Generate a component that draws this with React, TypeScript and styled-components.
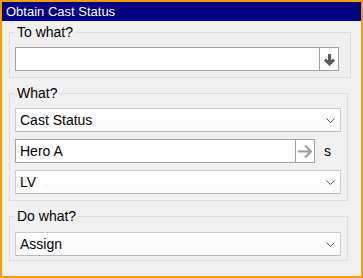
import React from 'react';
import styled, { createGlobalStyle } from 'styled-components';

const GlobalStyle = createGlobalStyle`
  html, body {
    margin: 0;
    padding: 0;
    background: #ffffff;
  }
  body {
    font-family: "Liberation Sans", Arial, sans-serif;
  }
`;

const Window = styled.div`
  box-sizing: border-box;
  width: 363px;
  height: 278px;
  border: 2px solid #f59e0b;
  background: #f0f0f0;
`;

const TitleBar = styled.div`
  height: 19px;
  line-height: 19px;
  padding-left: 4px;
  background: #000080;
  color: #ffffff;
  font-size: 13px;
`;

const Group = styled.fieldset<{ $wide?: boolean; $padTop?: number; $padBottom?: number; $top?: number }>`
  display: block;
  margin: ${({ $top = 7 }) => $top}px ${({ $wide }) => ($wide ? 10 : 13)}px 0 7px;
  padding: ${({ $padTop = 7 }) => $padTop}px ${({ $wide }) => ($wide ? 11 : 6)}px
    ${({ $padBottom = 6 }) => $padBottom}px 5px;
  border: 1px solid #dcdcdc;
  min-width: 0;
`;

const GroupBody = styled.div`
  display: flex;
  flex-direction: column;
  gap: 7px;
`;

const Legend = styled.legend`
  padding: 0 2px;
  font-size: 14px;
  line-height: 16px;
  color: #000000;
`;

const Row = styled.div`
  display: flex;
  align-items: center;
`;

const TextBox = styled.div<{ $width?: number }>`
  box-sizing: border-box;
  height: 24px;
  display: flex;
  border: 1px solid #a0a0a0;
  background: #ffffff;
  ${({ $width }) => ($width ? `width: ${$width}px;` : 'width: 100%;')}
`;

const TextValue = styled.div`
  flex: 1;
  padding-left: 4px;
  font-size: 14px;
  line-height: 22px;
  color: #000000;
`;

const BoxButton = styled.div`
  width: 18px;
  border-left: 1px solid #a0a0a0;
  display: flex;
  align-items: center;
  justify-content: center;
`;

const Suffix = styled.span`
  margin-left: 9px;
  font-size: 14px;
  line-height: 16px;
  color: #000000;
`;

const Select = styled.div`
  box-sizing: border-box;
  height: 24px;
  display: flex;
  align-items: center;
  padding: 0 5px 0 4px;
  border: 1px solid #cacaca;
  border-bottom-color: #b8b8b8;
  border-radius: 1px;
  background: linear-gradient(#ffffff, #fafafa);
  font-size: 14px;
  color: #000000;
`;

const SelectText = styled.span`
  flex: 1;
`;

const DownArrow = () => (
  <svg width="13" height="13" viewBox="0 0 13 13">
    <path d="M6.5 1 V11 M2 6.5 L6.5 11 L11 6.5" stroke="#5c5c5c" strokeWidth="3" fill="none" />
  </svg>
);

const RightArrow = () => (
  <svg width="16" height="15" viewBox="0 0 16 15">
    <path d="M1 7.5 H14 M8 1.5 L14 7.5 L8 13.5" stroke="#9a9a9a" strokeWidth="2" fill="none" />
  </svg>
);

const Chevron = () => (
  <svg width="9" height="5" viewBox="0 0 9 5">
    <path d="M0.5 0.5 L4.5 4.5 L8.5 0.5" stroke="#5a5a5a" strokeWidth="1" fill="none" />
  </svg>
);

const Dropdown: React.FC<{ value: string }> = ({ value }) => (
  <Select>
    <SelectText>{value}</SelectText>
    <Chevron />
  </Select>
);

export default function App() {
  return (
    <>
      <GlobalStyle />
      <Window>
        <TitleBar>Obtain Cast Status</TitleBar>
        <Group $wide $top={3}>
          <Legend>To what?</Legend>
          <GroupBody>
            <TextBox>
              <TextValue />
              <BoxButton>
                <DownArrow />
              </BoxButton>
            </TextBox>
          </GroupBody>
        </Group>
        <Group>
          <Legend>What?</Legend>
          <GroupBody>
            <Dropdown value="Cast Status" />
            <Row>
              <TextBox $width={300}>
                <TextValue>Hero A</TextValue>
                <BoxButton>
                  <RightArrow />
                </BoxButton>
              </TextBox>
              <Suffix>s</Suffix>
            </Row>
            <Dropdown value="LV" />
          </GroupBody>
        </Group>
        <Group $padTop={8} $padBottom={4}>
          <Legend>Do what?</Legend>
          <GroupBody>
            <Dropdown value="Assign" />
          </GroupBody>
        </Group>
      </Window>
    </>
  );
}
